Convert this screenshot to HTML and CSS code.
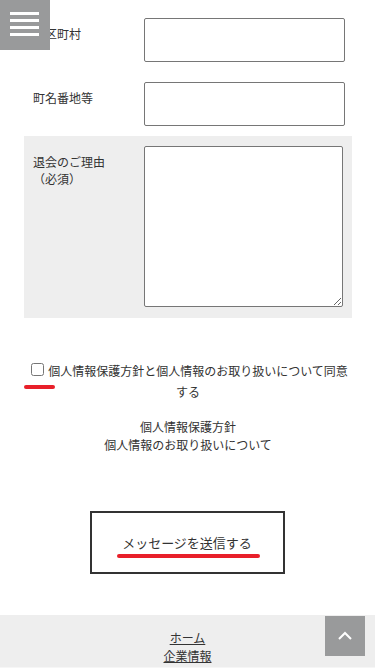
FILE: index.html
```html
<!DOCTYPE html>
<html lang="ja">
<head>
<meta charset="utf-8">
<meta name="viewport" content="width=device-width, initial-scale=1">
<title>退会フォーム</title>
<link rel="stylesheet" href="styles.css">
</head>
<body>
<button class="menu-btn" aria-label="メニュー">
  <span class="bar"></span><span class="bar"></span><span class="bar"></span><span class="bar"></span>
</button>

<main class="page">
  <form class="form">
    <div class="row">
      <label class="label">市区町村</label>
      <input class="field" type="text">
    </div>
    <div class="row">
      <label class="label">町名番地等</label>
      <input class="field" type="text">
    </div>
    <div class="row row-gray">
      <label class="label">退会のご理由<br>（必須）</label>
      <textarea class="area"></textarea>
    </div>

    <div class="consent">
      <label class="consent-label"><span class="check-wrap"><input class="check" type="checkbox"><span class="mark mark-check"></span></span>個人情報保護方針と個人情報のお取り扱いについて同意する</label>
    </div>

    <div class="policy-links">
      <p class="policy">個人情報保護方針</p>
      <p class="policy">個人情報のお取り扱いについて</p>
    </div>

    <div class="submit-wrap">
      <button class="submit" type="button"><span class="submit-text">メッセージを送信する<span class="mark mark-submit"></span></span></button>
    </div>
  </form>
</main>

<footer class="footer">
  <a class="foot-link" href="#">ホーム</a>
  <a class="foot-link" href="#">企業情報</a>
</footer>

<button class="top-btn" aria-label="ページトップへ">
  <svg width="16" height="10" viewBox="0 0 16 10"><path d="M2 8 L8 2 L14 8" fill="none" stroke="#fff" stroke-width="2"/></svg>
</button>
</body>
</html>
```

FILE: styles.css
```css
* { box-sizing: border-box; }
html, body { margin: 0; padding: 0; }
body {
  font-family: "Noto Sans CJK JP", "Noto Sans", sans-serif;
  font-size: 12px;
  color: #333;
  background: #fff;
}
.menu-btn {
  position: fixed;
  top: 0;
  left: 0;
  width: 50px;
  height: 50px;
  background: #999a9b;
  border: 0;
  padding: 12px 0 0 10px;
  display: flex;
  flex-direction: column;
  gap: 4.5px;
  z-index: 10;
}
.bar {
  display: block;
  width: 29px;
  height: 2.5px;
  background: #fff;
}
.page { padding-top: 8px; }
.form {
  margin: 0 23px 0 24px;
}
.row {
  display: flex;
  align-items: flex-start;
  padding: 10px 7px 10px 9px;
}
.row-gray {
  background: #eee;
  padding-bottom: 11px;
}
.label {
  width: 111px;
  flex: none;
  padding-top: 7px;
  line-height: 17px;
}
.field {
  width: 201px;
  height: 44px;
  border: 1px solid #767676;
  border-radius: 2px;
  background: #fff;
  margin: 0;
}
.area {
  width: 199px;
  height: 161px;
  border: 1px solid #767676;
  border-radius: 2px;
  background: #fff;
  margin: 0;
}
.consent {
  margin-top: 43px;
  text-align: center;
  line-height: 19px;
}
.consent-label { display: inline; }
.check-wrap {
  position: relative;
  display: inline-block;
  vertical-align: -2px;
}
.check {
  width: 13px;
  height: 13px;
  margin: 0 4px 0 3px;
  vertical-align: top;
}
.mark {
  position: absolute;
  display: block;
  background: #e8202a;
  border-radius: 2px;
  height: 4px;
}
.mark-check {
  left: -4px;
  top: 22px;
  width: 31px;
}
.policy-links {
  margin-top: 17px;
  text-align: center;
  line-height: 18px;
}
.policy { margin: 0; }
.submit-wrap {
  display: flex;
  justify-content: center;
  margin-top: 57px;
  margin-left: -2px;
}
.submit {
  width: 195px;
  height: 63px;
  border: 2px solid #333;
  background: #fff;
  font-family: inherit;
  font-size: 13px;
  color: #333;
  padding: 0;
}
.submit-text {
  position: relative;
  display: inline-block;
  line-height: 18px;
  margin-top: 1px;
}
.mark-submit {
  left: -5px;
  right: -8px;
  top: 20px;
}
.footer {
  margin-top: 41px;
  background: #eee;
  height: 54px;
  padding-top: 14px;
  display: flex;
  flex-direction: column;
  align-items: center;
  line-height: 18px;
  border-bottom: 2px solid #f6f6f6;
}
.foot-link {
  color: #333;
  text-decoration: underline;
}
.top-btn {
  position: fixed;
  right: 10px;
  bottom: 12px;
  width: 40px;
  height: 40px;
  background: #999a9b;
  border: 0;
  padding: 0;
  display: flex;
  align-items: center;
  justify-content: center;
}
```
